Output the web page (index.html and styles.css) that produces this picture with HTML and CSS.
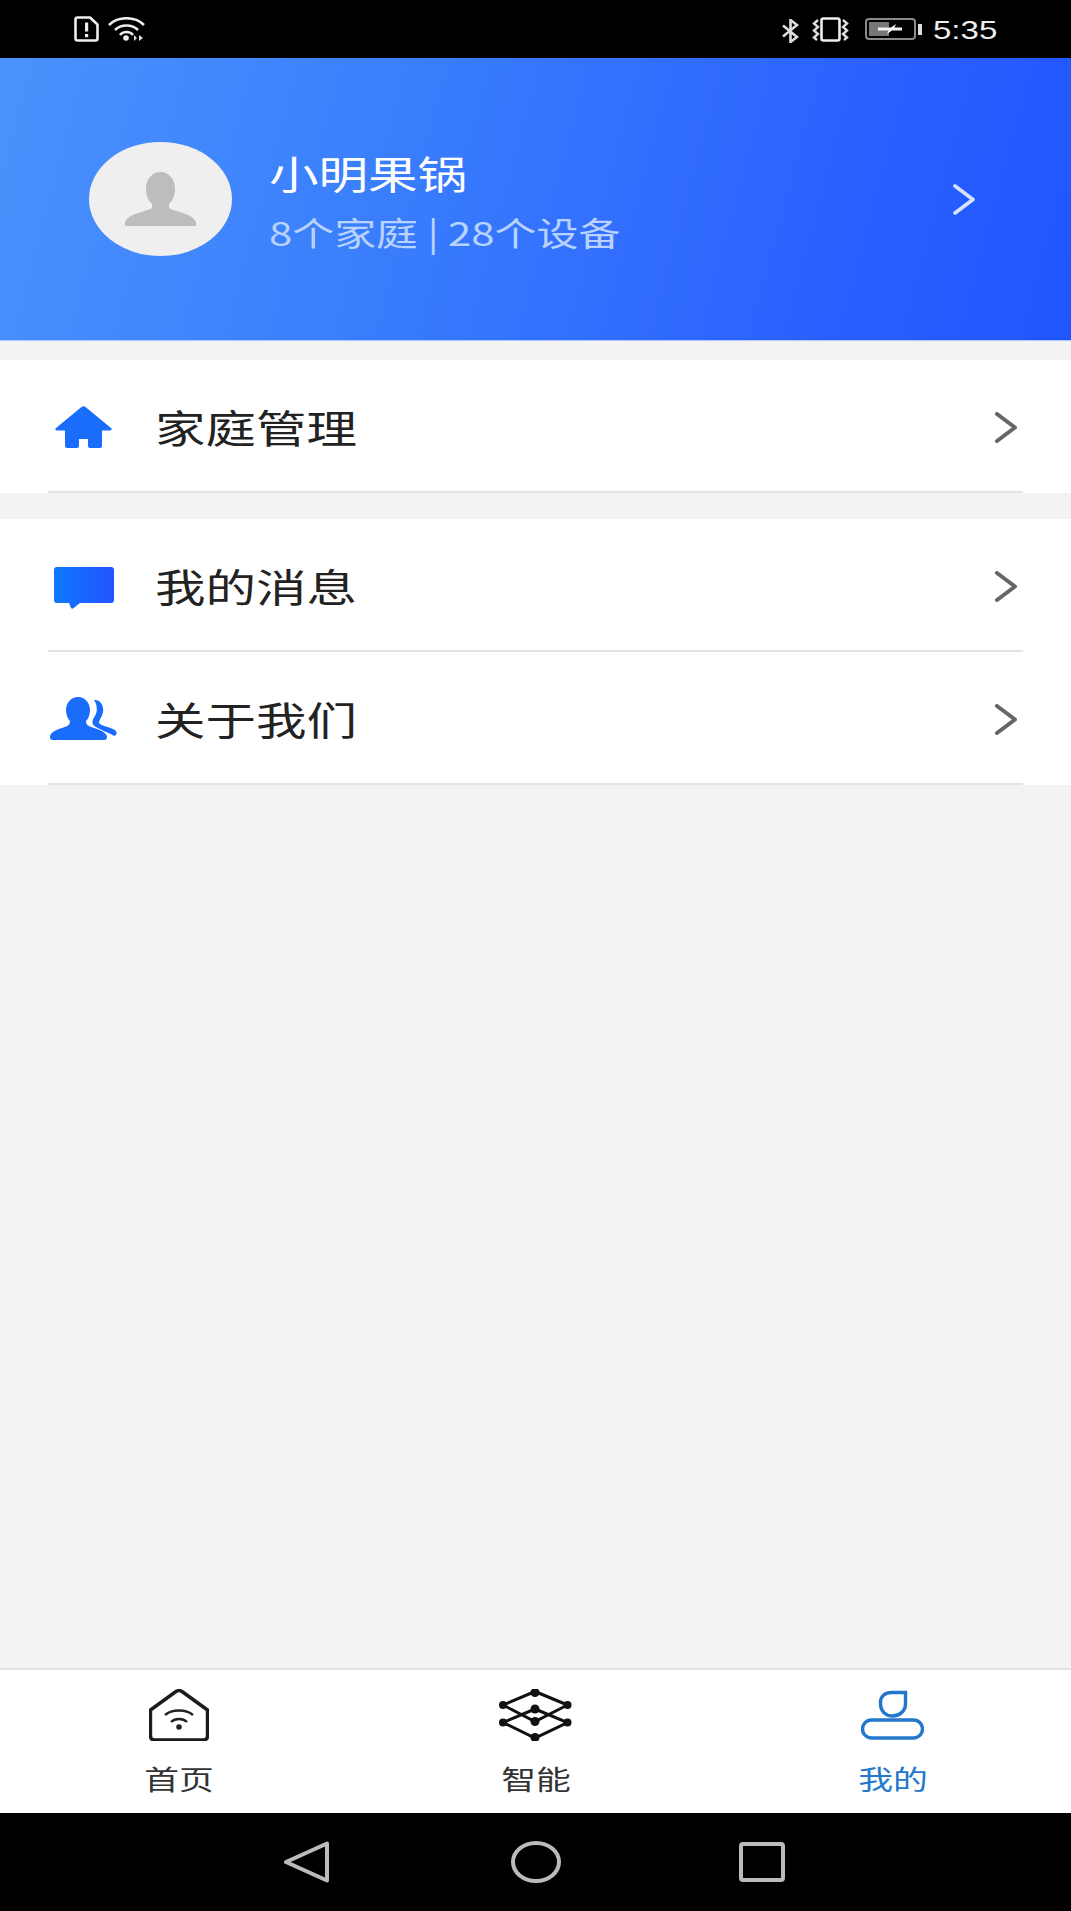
FILE: index.html
```html
<!DOCTYPE html>
<html>

<head lang="zh">
    <meta charset="UTF-8">
    <title>我的</title>
    <link rel="stylesheet" href="styles.css">
</head>

<body>
    <div id="page">
        <div id="status_bar">
            <svg class="sim_icon" width="25" height="26" viewBox="0 0 25 26">
                <path d="M3.5 1.500H16L23.500 8.500V22.500Q23.500 24.500 21.500 24.500H3.500Q1.500 24.500 1.500 22.500V3.500Q1.500 1.500 3.500 1.500Z" fill="none" stroke="#eee" stroke-width="2.600" stroke-linejoin="round"/>
                <rect x="11" y="6.500" width="3.200" height="9" fill="#eee"/>
                <rect x="11" y="18" width="3.200" height="3.200" fill="#eee"/>
            </svg>
            <svg class="wifi_icon" width="38" height="24" viewBox="0 0 38 24">
                <path d="M1 8C10 -1 27 -1 36 8" fill="none" stroke="#eee" stroke-width="2.600"/>
                <path d="M7 13C13 7 24 7 30 13" fill="none" stroke="#eee" stroke-width="2.600"/>
                <path d="M12 18C15 14 22 14 25 18" fill="none" stroke="#eee" stroke-width="2.600"/>
                <circle cx="18" cy="21" r="2.800" fill="#eee"/>
                <path d="M29 21L26 18V24ZM31 18V24L35 21Z" fill="#ddd"/>
            </svg>
            <div id="status_right">
                <svg class="bluetooth_icon" width="17" height="24" viewBox="0 0 17 24">
                    <path d="M1 6.500L15 18L8.500 23V1L15 6L1 17.500" fill="none" stroke="#ddd" stroke-width="2.600"/>
                </svg>
                <svg class="vibrate_icon" width="39" height="25" viewBox="0 0 39 25">
                    <rect x="10.500" y="1.500" width="18" height="22" rx="2" fill="none" stroke="#eee" stroke-width="2.600"/>
                    <path d="M7 3L3 6.500L7 10L3 13.500L7 17L3 20.500L6 23" fill="none" stroke="#ddd" stroke-width="2.400"/>
                    <path d="M32 3L36 6.500L32 10L36 13.500L32 17L36 20.500L33 23" fill="none" stroke="#ddd" stroke-width="2.400"/>
                </svg>
                <svg class="battery_icon" width="58" height="22" viewBox="0 0 58 22">
                    <rect x="1" y="1" width="49" height="20" rx="3" fill="none" stroke="#8a8a8a" stroke-width="2"/>
                    <rect x="4" y="4" width="20" height="14" fill="#777"/>
                    <path d="M13 9.500H26L31 6L29.500 9.500H37V12.500H27L22 16L23.500 12.500H13Z" fill="#f2f2f2"/>
                    <rect x="53" y="6" width="4" height="11" fill="#ddd"/>
                </svg>
                <span id="status_time" class="wide">5:35</span>
            </div>
        </div>

        <div id="header">
            <div id="avatar">
                <svg width="71" height="54" viewBox="0 0 71 54">
                    <path d="M35.500 0C43 0 50 6 50 17C50 25 47 29 44 32V36C50 40 67 41 71 50V54H0V50C4 41 21 40 27 36V32C24 29 21 25 21 17C21 6 28 0 35.500 0Z" fill="#bdbdbd"/>
                </svg>
            </div>
            <div id="user_info">
                <div id="user_name" class="wide">小明果锅</div>
                <div id="user_count" class="wide">8个家庭 | 28个设备</div>
            </div>
            <svg id="header_arrow" width="22" height="31" viewBox="0 0 22 31">
                <path d="M2 2L20 15.500L2 29" fill="none" stroke="#d5e3ff" stroke-width="3.600" stroke-linecap="round" stroke-linejoin="round"/>
            </svg>
        </div>

        <div id="family_group" class="group">
            <div class="row">
                <div class="row_icon">
                    <svg width="57" height="42" viewBox="0 0 57 42">
                        <path d="M26.500 1Q28.500 -0.500 30.500 1L56 22Q58 24 55 24.500H47V40Q47 42 45 42H35Q33 42 33 40V33H24V40Q24 42 22 42H12Q10 42 10 40V24.500H2Q-1 24 1 22Z" fill="#1a6cfa"/>
                    </svg>
                </div>
                <span class="row_text wide">家庭管理</span>
                <svg class="row_arrow" width="22" height="31" viewBox="0 0 22 31">
                    <path d="M2 2L20 15.500L2 29" fill="none" stroke="#666" stroke-width="4" stroke-linecap="round" stroke-linejoin="round"/>
                </svg>
            </div>
        </div>

        <div id="other_group" class="group">
            <div class="row">
                <div class="row_icon msg_icon">
                    <svg width="60" height="42" viewBox="0 0 60 42">
                        <defs>
                            <linearGradient id="msg_fill">
                                <stop offset="0" stop-color="#0f78ff"/>
                                <stop offset="1" stop-color="#2353ff"/>
                            </linearGradient>
                        </defs>
                        <path d="M3 0H57Q60 0 60 3V33Q60 36 57 36H26L19 41.500Q18 42 17 41L15 36H3Q0 36 0 33V3Q0 0 3 0Z" fill="url(#msg_fill)"/>
                    </svg>
                </div>
                <span class="row_text wide">我的消息</span>
                <svg class="row_arrow" width="22" height="31" viewBox="0 0 22 31">
                    <path d="M2 2L20 15.500L2 29" fill="none" stroke="#666" stroke-width="4" stroke-linecap="round" stroke-linejoin="round"/>
                </svg>
            </div>
            <div class="row">
                <div class="row_icon">
                    <svg width="67" height="44" viewBox="0 0 67 44">
                        <path d="M28 0C35 0 40 6 40 13C40 18 38 22 36 24C36 28 38 29 44 31C51 33 57 36 57 40Q57 43 54 43H3Q0 43 0 40C0 36 5 33 12 31C18 29 20 28 20 24C18 22 16 18 16 13C16 6 21 0 28 0Z" fill="#1a6cfa"/>
                        <path d="M44 3C50 2 54 8 53 15C52 20 49 23 49 26C51 29 60 30 65 33Q69 37 64 39C58 35 50 33 46 30C41 27 42 23 45 19C48 14 47 7 44 3Z" fill="#1a6cfa"/>
                    </svg>
                </div>
                <span class="row_text wide">关于我们</span>
                <svg class="row_arrow" width="22" height="31" viewBox="0 0 22 31">
                    <path d="M2 2L20 15.500L2 29" fill="none" stroke="#666" stroke-width="4" stroke-linecap="round" stroke-linejoin="round"/>
                </svg>
            </div>
        </div>

        <div id="spacer"></div>

        <div id="tab_bar">
            <div class="tab">
                <svg class="tab_icon" width="60" height="52" viewBox="0 0 60 52">
                    <path d="M1.500 21L27 2.500Q30 0.500 33 2.500L58.500 21V47Q58.500 51 54.500 51H5.500Q1.500 51 1.500 47Z" fill="none" stroke="#1c1c1c" stroke-width="3.400" stroke-linejoin="round"/>
                    <path d="M16 26C23 20 37 20 44 26" fill="none" stroke="#222" stroke-width="2.400"/>
                    <path d="M22 33C26 29 34 29 38 33" fill="none" stroke="#222" stroke-width="2.400"/>
                    <circle cx="30" cy="38" r="2.800" fill="#222"/>
                </svg>
                <span class="tab_text wide_center">首页</span>
            </div>
            <div class="tab">
                <svg class="tab_icon" width="73" height="52" viewBox="0 0 73 52">
                    <path d="M36 2.500L4 16L36 32.500L68.500 16Z" fill="none" stroke="#111" stroke-width="3"/>
                    <path d="M36 20L4 33.500L36 49L68.500 33.500Z" fill="none" stroke="#111" stroke-width="3"/>
                    <g fill="#111">
                        <circle cx="36" cy="3.500" r="4.500"/>
                        <circle cx="4" cy="16" r="4"/>
                        <circle cx="68.500" cy="16" r="4"/>
                        <circle cx="36" cy="20" r="4.500"/>
                        <circle cx="36" cy="32.500" r="4.500"/>
                        <circle cx="4" cy="33.500" r="4"/>
                        <circle cx="68.500" cy="33.500" r="4"/>
                        <circle cx="36" cy="48.500" r="4.500"/>
                    </g>
                </svg>
                <span class="tab_text wide_center">智能</span>
            </div>
            <div class="tab tab_on">
                <svg class="tab_icon" width="63" height="52" viewBox="0 0 63 52">
                    <path d="M44.500 3.500V15C44.500 22 38.500 27 31.500 27C24.500 27 19.500 22 19.500 15V13C19.500 7 24.500 3.500 30.500 3.500Z" fill="none" stroke="#2478cc" stroke-width="3.400"/>
                    <rect x="1.500" y="31" width="60" height="18" rx="9" fill="none" stroke="#2478cc" stroke-width="3.400"/>
                </svg>
                <span class="tab_text wide_center">我的</span>
            </div>
        </div>

        <div id="nav_bar">
            <svg width="45" height="42" viewBox="0 0 45 42">
                <path d="M43 2.500V39.500L2 21Z" fill="none" stroke="#bbb" stroke-width="4" stroke-linejoin="round"/>
            </svg>
            <svg class="nav_home" width="50" height="42" viewBox="0 0 50 42">
                <ellipse cx="25" cy="21" rx="23" ry="19" fill="none" stroke="#bbb" stroke-width="4"/>
            </svg>
            <svg width="46" height="40" viewBox="0 0 46 40">
                <rect x="2" y="2" width="42" height="36" rx="2" fill="none" stroke="#bbb" stroke-width="4"/>
            </svg>
        </div>
    </div>
</body>

</html>
```

FILE: styles.css
```css
* {
    margin: 0;
    padding: 0;
    box-sizing: border-box;
}

body {
    font-family: "Noto Sans CJK SC", "Liberation Sans", sans-serif;
    background-color: #f3f3f3;
}

svg {
    display: block;
    flex: none;
}

/* the reference is stretched sideways, so the text is too */
.wide {
    display: inline-block;
    white-space: nowrap;
    transform: scaleX(1.27);
    transform-origin: left center;
}

.wide_center {
    display: block;
    white-space: nowrap;
    transform: scaleX(1.29);
}

#page {
    width: 1071px;
    height: 1911px;
    display: flex;
    flex-direction: column;
}

#status_bar {
    height: 58px;
    flex: none;
    background-color: #000;
    display: flex;
    align-items: center;
    padding-left: 74px;
    padding-right: 74px;
}

.wifi_icon {
    margin-left: 9px;
}

#status_right {
    margin-left: auto;
    display: flex;
    align-items: center;
}

.bluetooth_icon {
    margin-top: 3px;
}

.vibrate_icon {
    margin-left: 12px;
}

.battery_icon {
    margin-left: 15px;
}

#status_time {
    width: 64px;
    margin-left: 10px;
    margin-top: 2px;
    font-family: "Liberation Sans", sans-serif;
    font-size: 26px;
    line-height: 30px;
    color: #eee;
}

#header {
    height: 283px;
    flex: none;
    background: linear-gradient(105deg, #4b92fd 0%, #3a7ffc 35%, #2a60ff 78%, #2155ff 100%);
    border-bottom: 1px solid #a9c8ff;
    display: flex;
    align-items: center;
    padding-left: 89px;
    padding-right: 96px;
}

#avatar {
    width: 143px;
    height: 114px;
    border-radius: 50%;
    background-color: #efefef;
    display: flex;
    align-items: flex-end;
    justify-content: center;
    padding-bottom: 30px;
}

#user_info {
    margin-left: 37px;
    margin-top: 3px;
}

#user_name {
    display: block;
    font-size: 39px;
    line-height: 50px;
    color: #fff;
}

#user_count {
    display: block;
    font-size: 33px;
    line-height: 44px;
    margin-top: 13px;
    color: #b9d2ff;
}

#header_arrow {
    margin-left: auto;
}

.group {
    flex: none;
    background-color: #fff;
}

#family_group {
    margin-top: 19px;
}

#other_group {
    margin-top: 26px;
}

.row {
    height: 133px;
    margin: 0 48px;
    padding-top: 3px;
    border-bottom: 2px solid #e3e3e3;
    display: flex;
    align-items: center;
}

.row_icon {
    width: 71px;
    display: flex;
    justify-content: center;
}

.msg_icon {
    margin-top: 3px;
}

.row_text {
    margin-left: 36px;
    margin-top: -3px;
    font-size: 39px;
    line-height: 50px;
    color: #222;
    transform: scaleX(1.295);
}

.row_arrow {
    margin-left: auto;
    margin-right: 6px;
}

#spacer {
    flex: 1;
}

#tab_bar {
    height: 145px;
    flex: none;
    background-color: #fff;
    border-top: 2px solid #e2e2e2;
    display: flex;
}

.tab {
    width: 357px;
    display: flex;
    flex-direction: column;
    align-items: center;
    padding-top: 19px;
}

.tab_text {
    margin-top: 20px;
    font-size: 27px;
    line-height: 36px;
    color: #333;
}

.tab_on .tab_text {
    color: #2478cc;
}

#nav_bar {
    height: 98px;
    flex: none;
    background-color: #000;
    display: flex;
    align-items: center;
    padding-left: 284px;
}

.nav_home {
    margin-left: 182px;
    margin-right: 178px;
}
```
